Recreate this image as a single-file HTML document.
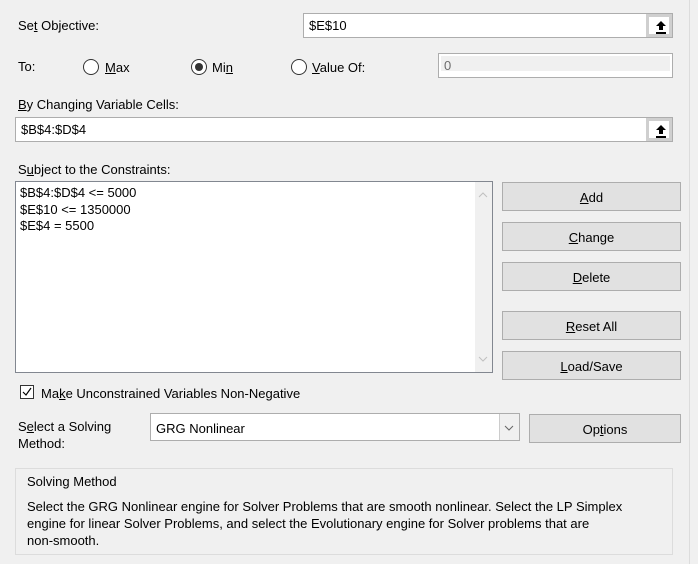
<!DOCTYPE html>
<html><head><style>
*{box-sizing:border-box;margin:0;padding:0}
body{width:698px;height:564px;background:#f0f0f0;font-family:"Liberation Sans",sans-serif;font-size:13px;color:#000;position:relative;overflow:hidden}
.a{position:absolute;white-space:nowrap}
.inp{position:absolute;background:#fff;border:1px solid #adadad}
.up{position:absolute;right:0;top:0;width:26px;height:100%;background:#fff;border:3px solid #cfcfcf}
.up svg{position:absolute;left:6px;top:3px}
.btn{position:absolute;background:#e1e1e1;border:1px solid #adadad;text-align:center;line-height:29px}
.rad{position:absolute;width:16px;height:16px;border:1px solid #333;border-radius:50%;background:#fff}
u{text-decoration:underline}
</style></head><body>
<div class="a" style="left:18px;top:18px">Se<u>t</u> Objective:</div>
<div class="inp" style="left:303px;top:13px;width:370px;height:25px"><span class="a" style="left:5px;top:4px">$E$10</span><div class="up"><svg width="12" height="14" viewBox="0 0 12 14"><path d="M6 1L1 6H4V10H8V6H11Z" fill="#000"/><rect x="1" y="12" width="10" height="2" fill="#000"/></svg></div></div>

<div class="a" style="left:18px;top:59px">To:</div>
<div class="rad" style="left:83px;top:59px"></div><div class="a" style="left:105px;top:60px"><u>M</u>ax</div>
<div class="rad" style="left:191px;top:59px"><div style="position:absolute;left:3px;top:3px;width:8px;height:8px;border-radius:50%;background:#333"></div></div><div class="a" style="left:212px;top:60px">Mi<u>n</u></div>
<div class="rad" style="left:291px;top:59px"></div><div class="a" style="left:312px;top:60px"><u>V</u>alue Of:</div>
<div class="inp" style="left:438px;top:53px;width:235px;height:25px;border-color:#adadad"><div style="position:absolute;left:2px;top:2px;right:2px;bottom:6px;background:#f0f0f0"></div><span class="a" style="left:5px;top:4px;color:#6d6d6d">0</span></div>

<div class="a" style="left:18px;top:97px"><u>B</u>y Changing Variable Cells:</div>
<div class="inp" style="left:15px;top:117px;width:658px;height:25px"><span class="a" style="left:5px;top:4px">$B$4:$D$4</span><div class="up"><svg width="12" height="14" viewBox="0 0 12 14"><path d="M6 1L1 6H4V10H8V6H11Z" fill="#000"/><rect x="1" y="12" width="10" height="2" fill="#000"/></svg></div></div>

<div style="position:absolute;left:689px;top:0;width:1px;height:564px;background:#dcdcdc"></div>

<div class="a" style="left:18px;top:162px">S<u>u</u>bject to the Constraints:</div>
<div class="inp" style="left:15px;top:181px;width:478px;height:192px;border-color:#828790">
<div class="a" style="left:4px;top:3px;line-height:16.5px;white-space:pre">$B$4:$D$4 &lt;= 5000
$E$10 &lt;= 1350000
$E$4 = 5500</div>
<div style="position:absolute;right:0;top:0;width:17px;height:100%;background:#f0f0f0"></div>
<svg width="10" height="6" style="position:absolute;right:4px;top:10px"><path d="M1 5L5 1L9 5" stroke="#c0c0c0" fill="none"/></svg>
<svg width="10" height="6" style="position:absolute;right:4px;bottom:10px"><path d="M1 1L5 5L9 1" stroke="#c0c0c0" fill="none"/></svg>
</div>
<div class="btn" style="left:502px;top:182px;width:179px;height:29px"><u>A</u>dd</div>
<div class="btn" style="left:502px;top:222px;width:179px;height:29px"><u>C</u>hange</div>
<div class="btn" style="left:502px;top:262px;width:179px;height:29px"><u>D</u>elete</div>
<div class="btn" style="left:502px;top:311px;width:179px;height:29px"><u>R</u>eset All</div>
<div class="btn" style="left:502px;top:351px;width:179px;height:29px"><u>L</u>oad/Save</div>

<div style="position:absolute;left:20px;top:385px;width:14px;height:14px;border:1px solid #333;background:#fff"><svg width="12" height="12" style="position:absolute;left:0;top:0"><path d="M2 6L5 9L10 2" stroke="#000" stroke-width="1.2" fill="none"/></svg></div>
<div class="a" style="left:41px;top:386px">Ma<u>k</u>e Unconstrained Variables Non-Negative</div>

<div class="a" style="left:18px;top:418px;line-height:17px">S<u>e</u>lect a Solving<br>Method:</div>
<div class="inp" style="left:150px;top:413px;width:370px;height:28px"><span class="a" style="left:5px;top:7px">GRG Nonlinear</span>
<div style="position:absolute;right:0;top:0;width:20px;height:100%;background:#f0f0f0;border-left:1px solid #ccc"></div>
<svg width="10" height="6" style="position:absolute;right:5px;top:11px"><path d="M1 1L5 5L9 1" stroke="#666" fill="none"/></svg></div>
<div class="btn" style="left:529px;top:414px;width:152px;height:29px">Op<u>t</u>ions</div>

<div style="position:absolute;left:15px;top:468px;width:658px;height:87px;border:1px solid #dcdcdc"></div>
<div class="a" style="left:27px;top:474px">Solving Method</div>
<div class="a" style="left:27px;top:498px;line-height:17px">Select the GRG Nonlinear engine for Solver Problems that are smooth nonlinear. Select the LP Simplex<br>engine for linear Solver Problems, and select the Evolutionary engine for Solver problems that are<br>non-smooth.</div>
</body></html>
